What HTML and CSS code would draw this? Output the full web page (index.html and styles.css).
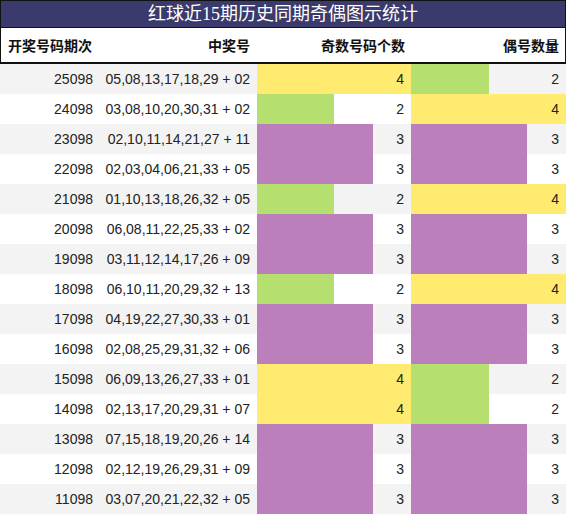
FILE: index.html
```
<!DOCTYPE html>
<html lang="zh-CN">
<head>
    <meta charset="UTF-8">
    <title>红球近15期历史同期奇偶图示统计</title>
    <link rel="stylesheet" href="styles.css">
</head>
<body>

<div class="chart">
    <div class="title">红球近15期历史同期奇偶图示统计</div>

    <div class="row head">
        <div class="cell c-issue">开奖号码期次</div>
        <div class="cell c-nums">中奖号</div>
        <div class="cell c-bar">奇数号码个数</div>
        <div class="cell c-bar">偶号数量</div>
    </div>

    <!-- 15 rows -->
    <div class="row">
        <div class="cell c-issue">25098</div>
        <div class="cell c-nums">05,08,13,17,18,29 + 02</div>
        <div class="cell c-bar"><div class="bar n4" style="width:100%"></div><span>4</span></div>
        <div class="cell c-bar"><div class="bar n2" style="width:50%"></div><span>2</span></div>
    </div>
    <div class="row">
        <div class="cell c-issue">24098</div>
        <div class="cell c-nums">03,08,10,20,30,31 + 02</div>
        <div class="cell c-bar"><div class="bar n2" style="width:50%"></div><span>2</span></div>
        <div class="cell c-bar"><div class="bar n4" style="width:100%"></div><span>4</span></div>
    </div>
    <div class="row">
        <div class="cell c-issue">23098</div>
        <div class="cell c-nums">02,10,11,14,21,27 + 11</div>
        <div class="cell c-bar"><div class="bar n3" style="width:75%"></div><span>3</span></div>
        <div class="cell c-bar"><div class="bar n3" style="width:75%"></div><span>3</span></div>
    </div>
    <div class="row">
        <div class="cell c-issue">22098</div>
        <div class="cell c-nums">02,03,04,06,21,33 + 05</div>
        <div class="cell c-bar"><div class="bar n3" style="width:75%"></div><span>3</span></div>
        <div class="cell c-bar"><div class="bar n3" style="width:75%"></div><span>3</span></div>
    </div>
    <div class="row">
        <div class="cell c-issue">21098</div>
        <div class="cell c-nums">01,10,13,18,26,32 + 05</div>
        <div class="cell c-bar"><div class="bar n2" style="width:50%"></div><span>2</span></div>
        <div class="cell c-bar"><div class="bar n4" style="width:100%"></div><span>4</span></div>
    </div>
    <div class="row">
        <div class="cell c-issue">20098</div>
        <div class="cell c-nums">06,08,11,22,25,33 + 02</div>
        <div class="cell c-bar"><div class="bar n3" style="width:75%"></div><span>3</span></div>
        <div class="cell c-bar"><div class="bar n3" style="width:75%"></div><span>3</span></div>
    </div>
    <div class="row">
        <div class="cell c-issue">19098</div>
        <div class="cell c-nums">03,11,12,14,17,26 + 09</div>
        <div class="cell c-bar"><div class="bar n3" style="width:75%"></div><span>3</span></div>
        <div class="cell c-bar"><div class="bar n3" style="width:75%"></div><span>3</span></div>
    </div>
    <div class="row">
        <div class="cell c-issue">18098</div>
        <div class="cell c-nums">06,10,11,20,29,32 + 13</div>
        <div class="cell c-bar"><div class="bar n2" style="width:50%"></div><span>2</span></div>
        <div class="cell c-bar"><div class="bar n4" style="width:100%"></div><span>4</span></div>
    </div>
    <div class="row">
        <div class="cell c-issue">17098</div>
        <div class="cell c-nums">04,19,22,27,30,33 + 01</div>
        <div class="cell c-bar"><div class="bar n3" style="width:75%"></div><span>3</span></div>
        <div class="cell c-bar"><div class="bar n3" style="width:75%"></div><span>3</span></div>
    </div>
    <div class="row">
        <div class="cell c-issue">16098</div>
        <div class="cell c-nums">02,08,25,29,31,32 + 06</div>
        <div class="cell c-bar"><div class="bar n3" style="width:75%"></div><span>3</span></div>
        <div class="cell c-bar"><div class="bar n3" style="width:75%"></div><span>3</span></div>
    </div>
    <div class="row">
        <div class="cell c-issue">15098</div>
        <div class="cell c-nums">06,09,13,26,27,33 + 01</div>
        <div class="cell c-bar"><div class="bar n4" style="width:100%"></div><span>4</span></div>
        <div class="cell c-bar"><div class="bar n2" style="width:50%"></div><span>2</span></div>
    </div>
    <div class="row">
        <div class="cell c-issue">14098</div>
        <div class="cell c-nums">02,13,17,20,29,31 + 07</div>
        <div class="cell c-bar"><div class="bar n4" style="width:100%"></div><span>4</span></div>
        <div class="cell c-bar"><div class="bar n2" style="width:50%"></div><span>2</span></div>
    </div>
    <div class="row">
        <div class="cell c-issue">13098</div>
        <div class="cell c-nums">07,15,18,19,20,26 + 14</div>
        <div class="cell c-bar"><div class="bar n3" style="width:75%"></div><span>3</span></div>
        <div class="cell c-bar"><div class="bar n3" style="width:75%"></div><span>3</span></div>
    </div>
    <div class="row">
        <div class="cell c-issue">12098</div>
        <div class="cell c-nums">02,12,19,26,29,31 + 09</div>
        <div class="cell c-bar"><div class="bar n3" style="width:75%"></div><span>3</span></div>
        <div class="cell c-bar"><div class="bar n3" style="width:75%"></div><span>3</span></div>
    </div>
    <div class="row">
        <div class="cell c-issue">11098</div>
        <div class="cell c-nums">03,07,20,21,22,32 + 05</div>
        <div class="cell c-bar"><div class="bar n3" style="width:75%"></div><span>3</span></div>
        <div class="cell c-bar"><div class="bar n3" style="width:75%"></div><span>3</span></div>
    </div>
</div>

</body>
</html>
```

FILE: styles.css
```
body {
    margin: 0;
    padding: 0;
    background-color: white;
    font-family: "Liberation Sans", Arial, "Noto Sans CJK SC", sans-serif;
    font-size: 14px;
    color: #222;
}

.chart {
    width: 566px;
}

.title {
    height: 26px;
    line-height: 26px;
    background-color: #3b3a6c;
    color: white;
    text-align: center;
    font-family: "Liberation Serif", "Noto Sans CJK SC", serif;
    font-size: 18px;
    border: 1px solid #111;
}

.row {
    display: grid;
    grid-template-columns: 100px 157px 154px 155px;
    height: 30px;
}

.row:nth-child(odd) {
    background-color: #f3f3f3;
}

.row.head {
    height: 34px;
    background-color: white;
    border-left: 1px solid #111;
    border-right: 1px solid #111;
    border-bottom: 2px solid #111;
    grid-template-columns: 99px 157px 154px 154px;
    font-family: "Noto Sans CJK SC", sans-serif;
    font-weight: bold;
    color: #111;
}

.cell {
    display: flex;
    align-items: center;
    justify-content: flex-end;
    padding-right: 7px;
    white-space: nowrap;
}

.head .c-issue {
    justify-content: flex-start;
    padding-left: 7px;
}

/* bar cells: bar and number share one grid area */
.c-bar {
    display: grid;
    grid-template-columns: 100%;
    grid-template-rows: 100%;
    justify-content: stretch;
    align-items: stretch;
    padding-right: 0;
}

.c-bar .bar,
.c-bar span {
    grid-area: 1 / 1;
}

.c-bar span {
    align-self: center;
    justify-self: end;
    padding-right: 7px;
}

.row.head .c-bar {
    display: flex;
    justify-content: flex-end;
    align-items: center;
    padding-right: 6px;
}

.bar {
    height: 100%;
}

.n4 {
    background-color: #ffeb70;
}

.n2 {
    background-color: #b5e06f;
}

.n3 {
    background-color: #bb80bb;
}
```
